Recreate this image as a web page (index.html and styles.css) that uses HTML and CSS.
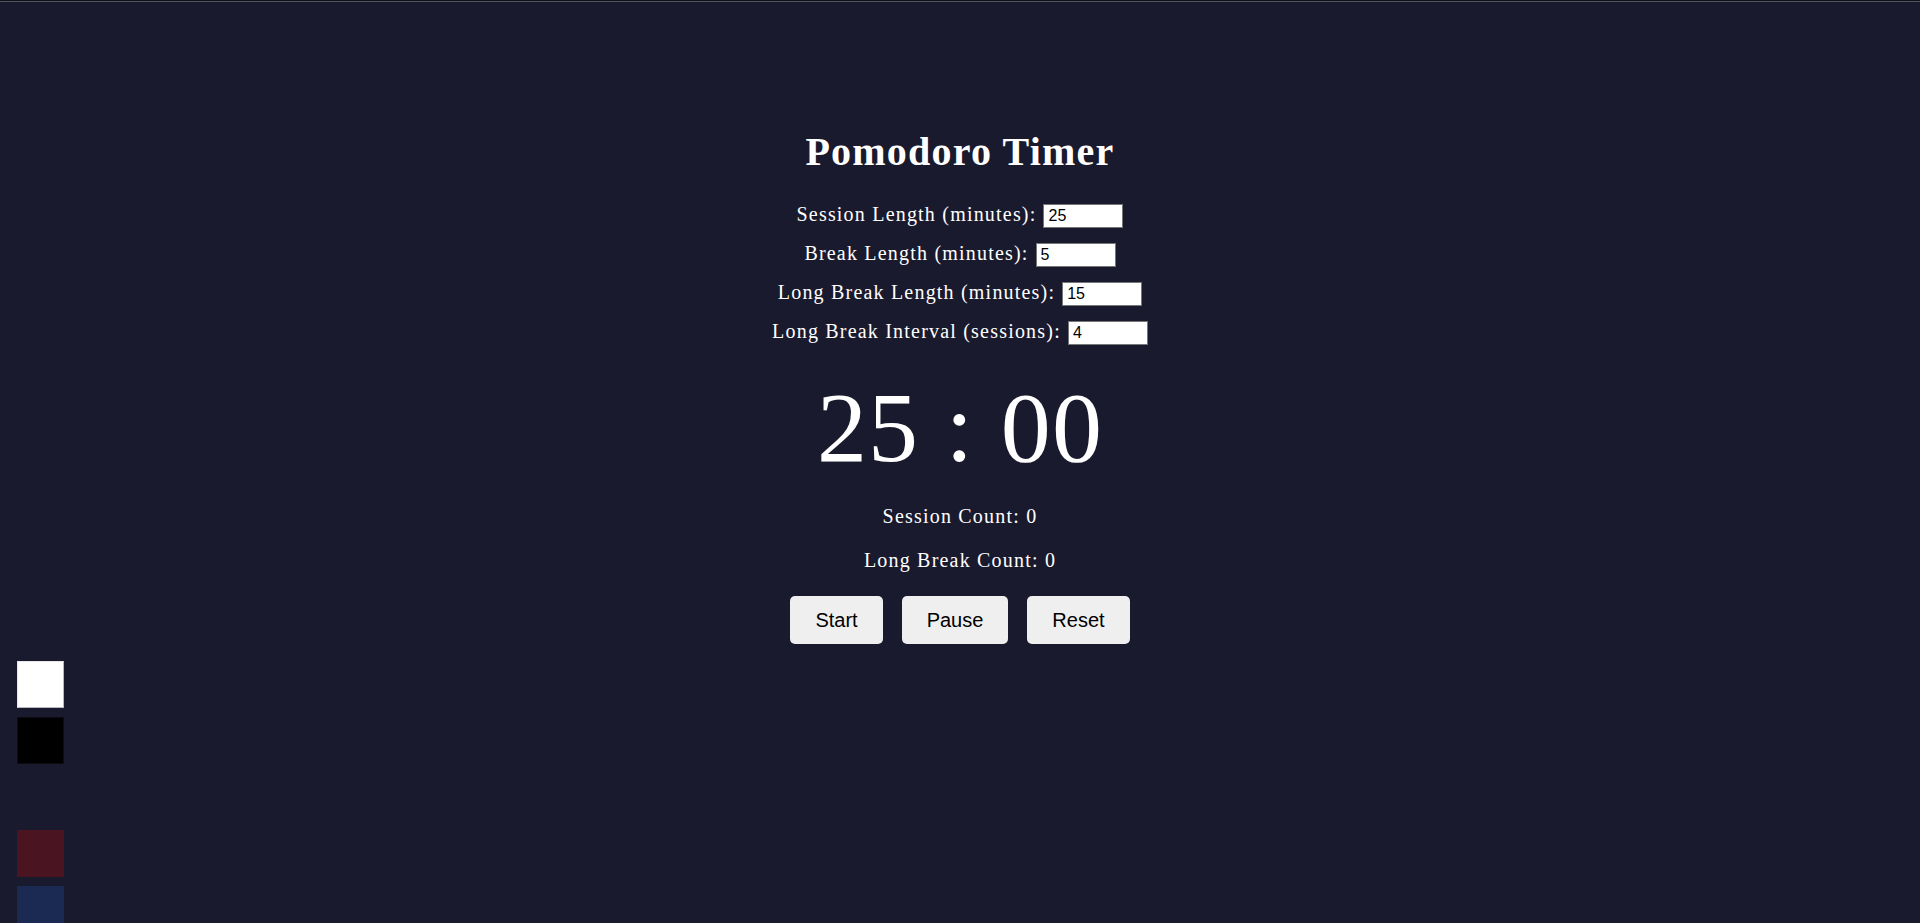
FILE: index.html
```html
<!DOCTYPE html>
<html lang="en">
<head>
<meta charset="utf-8">
<title>Pomodoro Timer</title>
<link rel="stylesheet" href="styles.css">
</head>
<body>
<div class="topbar"></div>
<main class="app">
  <h1 class="title">Pomodoro Timer</h1>
  <div class="settings">
    <div class="field"><label class="field-label" for="session">Session Length (minutes):</label><input class="field-input" id="session" type="text" value="25"></div>
    <div class="field"><label class="field-label" for="brk">Break Length (minutes):</label><input class="field-input" id="brk" type="text" value="5"></div>
    <div class="field"><label class="field-label" for="longbrk">Long Break Length (minutes):</label><input class="field-input" id="longbrk" type="text" value="15"></div>
    <div class="field"><label class="field-label" for="interval">Long Break Interval (sessions):</label><input class="field-input" id="interval" type="text" value="4"></div>
  </div>
  <div class="timer">25 : 00</div>
  <p class="count">Session Count: 0</p>
  <p class="count">Long Break Count: 0</p>
  <div class="controls">
    <button class="btn" type="button">Start</button>
    <button class="btn" type="button">Pause</button>
    <button class="btn" type="button">Reset</button>
  </div>
</main>
<div class="swatches">
  <div class="swatch swatch-white"></div>
  <div class="swatch swatch-black"></div>
  <div class="swatch swatch-bg"></div>
  <div class="swatch swatch-red"></div>
  <div class="swatch swatch-blue"></div>
</div>
</body>
</html>
```

FILE: styles.css
```css
html, body {
  margin: 0;
  padding: 0;
}

body {
  background: #1a1a2e;
  color: #ffffff;
  font-family: "Liberation Serif", "Times New Roman", serif;
  font-size: 20px;
  letter-spacing: 1.2px;
  height: 923px;
  overflow: hidden;
}

.topbar {
  height: 1px;
  background: #0f0f18;
  border-bottom: 1px solid #55555f;
}

.app {
  display: flex;
  flex-direction: column;
  align-items: center;
  padding-top: 126.5px;
}

.title {
  margin: 0;
  font-size: 40px;
  line-height: 46px;
  font-weight: bold;
}

.settings {
  display: flex;
  flex-direction: column;
  align-items: center;
  gap: 15px;
  margin-top: 28.5px;
}

.field {
  display: flex;
  align-items: baseline;
  justify-content: center;
  height: 24px;
}

.field-label {
  line-height: 22px;
  margin-right: 7px;
}

.field-input {
  box-sizing: border-box;
  width: 80px;
  height: 24px;
  padding: 2px 4px;
  border: 1px solid #767676;
  background: #ffffff;
  color: #000000;
  font-family: "Liberation Sans", Arial, sans-serif;
  font-size: 16px;
  letter-spacing: normal;
  border-radius: 0;
  outline: none;
}

.timer {
  margin-top: 25.75px;
  font-size: 100px;
  line-height: 115px;
}

.count {
  margin: 20px 0 0;
  line-height: 23px;
}

.count + .count {
  margin-top: 21px;
}

.controls {
  display: flex;
  gap: 19px;
  margin-top: 24.25px;
}

.btn {
  height: 48px;
  padding: 0 25px;
  border: none;
  border-radius: 5px;
  background: #efefef;
  color: #000000;
  font-family: "Liberation Sans", Arial, sans-serif;
  font-size: 20px;
  letter-spacing: normal;
  line-height: 23px;
  cursor: pointer;
}

.swatches {
  position: fixed;
  left: 17px;
  top: 661px;
  display: flex;
  flex-direction: column;
  gap: 9.25px;
}

.swatch {
  box-sizing: border-box;
  width: 47px;
  height: 47px;
}

.swatch-white {
  background: #ffffff;
  border: 1px solid #b8b8c0;
  border-top-color: #e6e6ea;
  border-left-color: #e6e6ea;
}

.swatch-black {
  background: #000000;
  border: 1px solid #0c0c12;
}

.swatch-bg {
  background: #1a1a2e;
}

.swatch-red {
  background: #4a1421;
}

.swatch-blue {
  background: #1a2a52;
}
```
